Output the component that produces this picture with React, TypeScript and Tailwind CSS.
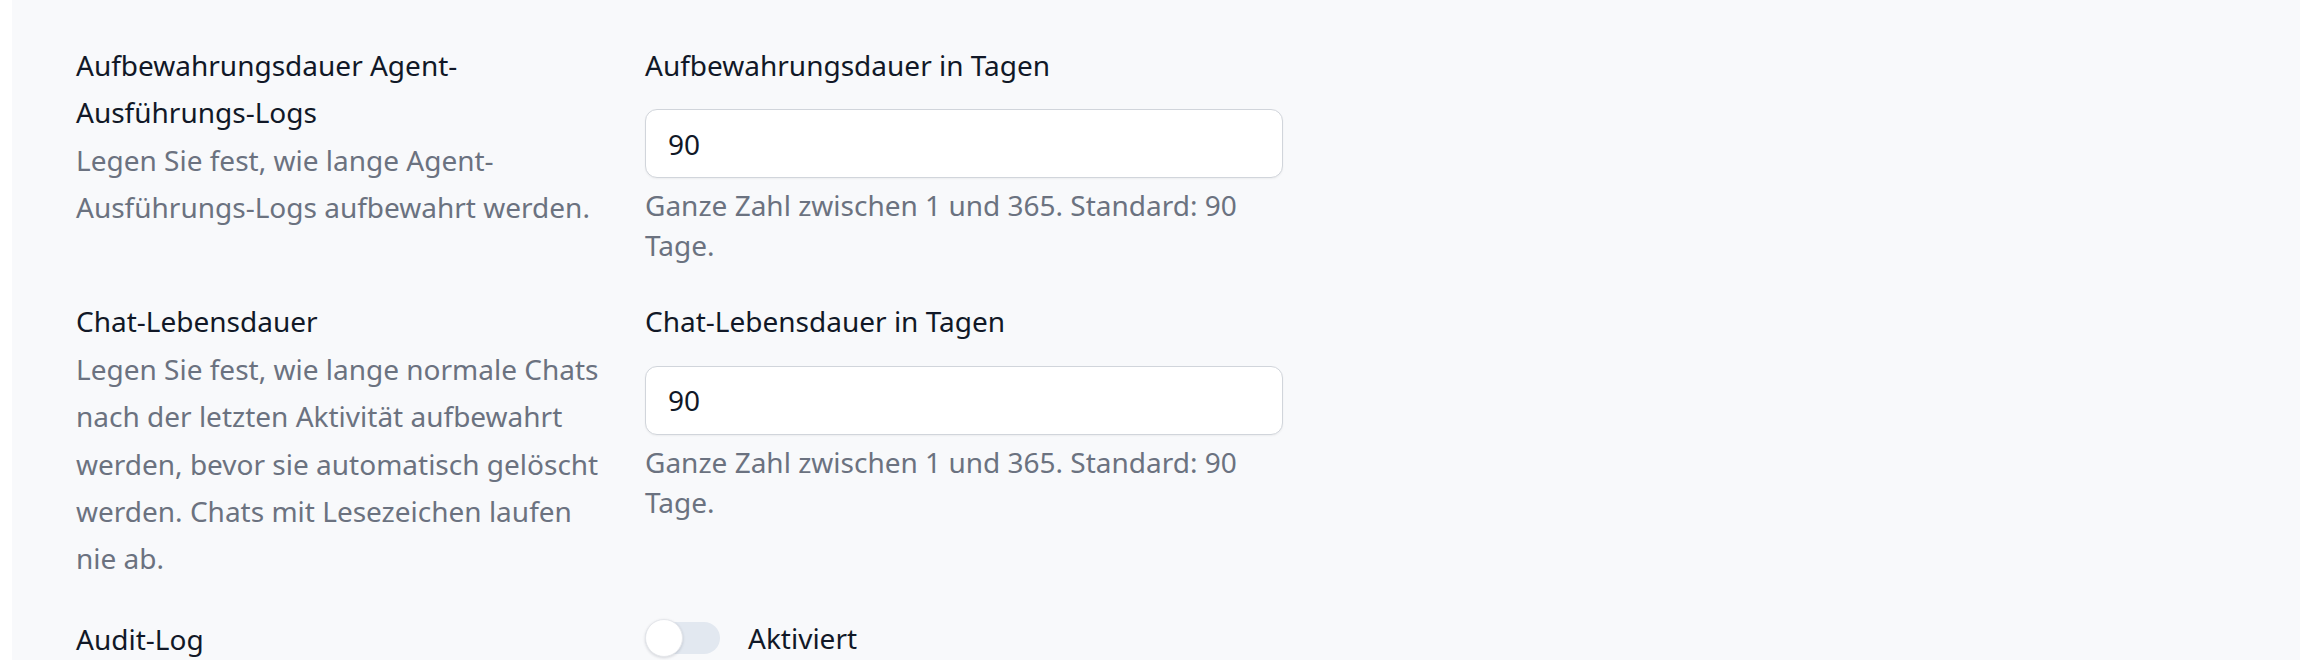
import React from 'react'

type NumberSetting = {
  title: string
  description: string
  label: string
  value: string
  help: string
}

const settings: NumberSetting[] = [
  {
    title: 'Aufbewahrungsdauer Agent-Ausführungs-Logs',
    description: 'Legen Sie fest, wie lange Agent-Ausführungs-Logs aufbewahrt werden.',
    label: 'Aufbewahrungsdauer in Tagen',
    value: '90',
    help: 'Ganze Zahl zwischen 1 und 365. Standard: 90 Tage.',
  },
  {
    title: 'Chat-Lebensdauer',
    description:
      'Legen Sie fest, wie lange normale Chats nach der letzten Aktivität aufbewahrt werden, bevor sie automatisch gelöscht werden. Chats mit Lesezeichen laufen nie ab.',
    label: 'Chat-Lebensdauer in Tagen',
    value: '90',
    help: 'Ganze Zahl zwischen 1 und 365. Standard: 90 Tage.',
  },
]

function Toggle({ checked }: { checked: boolean }) {
  return (
    <button
      type="button"
      role="switch"
      aria-checked={checked}
      className="relative h-[32px] w-[75px] shrink-0 rounded-full bg-[#e2e8f0]"
    >
      <span className="absolute -top-[3px] left-0 size-[38px] rounded-full border border-[#e5e7eb] bg-white shadow-[0_1px_3px_rgba(15,23,42,0.15)]" />
    </button>
  )
}

export default function App() {
  return (
    <div className="flex min-h-screen font-['Noto_Sans',sans-serif] text-[28px] leading-[47.4px]">
      <div className="w-[12px] shrink-0 bg-white" />
      <div className="flex-1 bg-[#f8f9fb] pl-[64px] pt-[42px]">
        <div className="flex flex-col gap-[33px]">
          {settings.map((s) => (
            <div key={s.title} className="flex items-start gap-[33px]">
              <div className="w-[536px] shrink-0">
                <p className="text-[#111827]">{s.title}</p>
                <p className="text-[#6b7280]">{s.description}</p>
              </div>
              <div className="w-[638px] shrink-0">
                <label className="block text-[#111827]">{s.label}</label>
                <input
                  type="text"
                  defaultValue={s.value}
                  className="mt-[20px] block h-[69px] w-full rounded-[12px] border-[1.5px] border-[#d1d5db] bg-white px-[22px] text-[28px] text-[#111827] shadow-[0_1px_2px_rgba(0,0,0,0.05)] outline-none"
                />
                <p className="mt-[7px] leading-[40px] text-[#6b7280]">{s.help}</p>
              </div>
            </div>
          ))}

          {/* Audit log */}
          <div className="flex items-start gap-[33px]">
            <div className="w-[536px] shrink-0">
              <p className="text-[#111827]">Audit-Log</p>
            </div>
            <div className="flex h-[44px] w-[638px] shrink-0 items-center gap-[28px]">
              <Toggle checked={false} />
              <span className="leading-[44px] text-[#111827]">Aktiviert</span>
            </div>
          </div>
        </div>
      </div>
    </div>
  )
}
